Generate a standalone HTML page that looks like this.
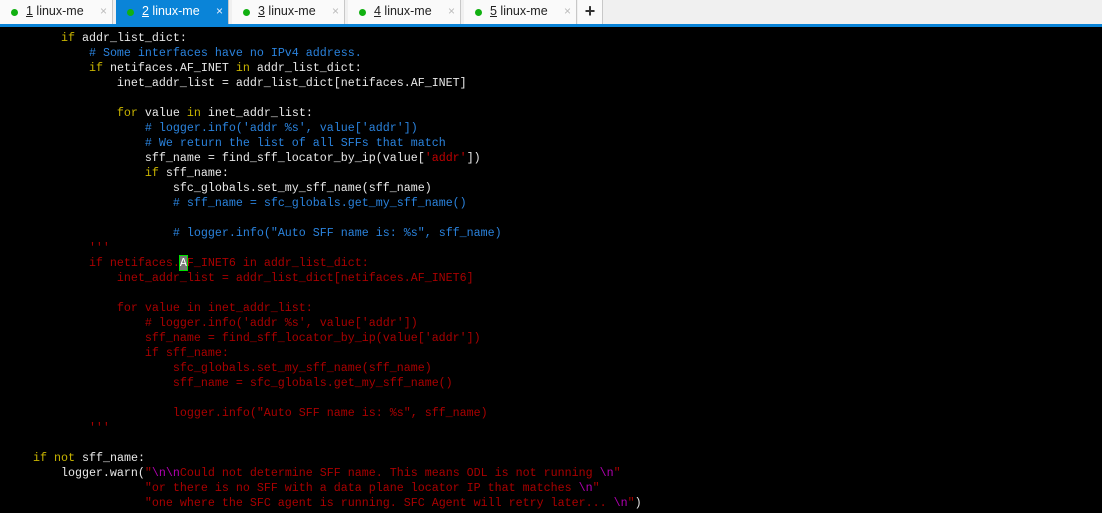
<!DOCTYPE html>
<html><head><meta charset="utf-8"><style>
html,body{margin:0;padding:0;background:#000;width:1102px;height:513px;overflow:hidden}
.tabs{position:absolute;left:0;top:0;width:1102px;height:24px;background:#f0f0f0;border-bottom:3px solid #0a84d8;font-family:"Liberation Sans",sans-serif;font-size:12.5px;color:#222}
.tab{position:absolute;top:0;height:24px;width:113px;background:#fafafa;border-right:1px solid #c8c8c8;box-sizing:border-box}
.tab.act{background:#0a84d8;color:#fff}
.tab .dot{position:absolute;left:11px;top:9px;width:7px;height:7px;border-radius:50%;background:#11b011}
.tab .t{position:absolute;left:26px;top:4px}
.tab .x{position:absolute;left:100px;top:4px;color:#bbb;font-size:12px}
.tab.act .x{color:#e8f0ff}
.plus{position:absolute;left:578px;top:0;width:24px;height:24px;background:#fafafa;border-right:1px solid #c8c8c8;font-size:18px;text-align:center;line-height:22px;font-weight:bold;color:#333}
pre{position:absolute;left:5px;top:31px;margin:0;font-family:"Liberation Mono",monospace;font-size:11.67px;line-height:15px;color:#e8e8e8;letter-spacing:0}
.k{color:#c8b400}.c{color:#2a82dc}.s{color:#c00000}.r{color:#a80000}.m{color:#b000b0}
.cur{outline:1px solid #00e000;background:#777;color:#fff}
</style></head><body>
<div class="tabs">
<div class="tab" style="left:0"><span class="dot"></span><span class="t"><u>1</u> linux-me</span><span class="x">×</span></div>
<div class="tab act" style="left:116px"><span class="dot"></span><span class="t"><u>2</u> linux-me</span><span class="x">×</span></div>
<div class="tab" style="left:232px"><span class="dot"></span><span class="t"><u>3</u> linux-me</span><span class="x">×</span></div>
<div class="tab" style="left:348px"><span class="dot"></span><span class="t"><u>4</u> linux-me</span><span class="x">×</span></div>
<div class="tab" style="left:464px"><span class="dot"></span><span class="t"><u>5</u> linux-me</span><span class="x">×</span></div>
<div class="plus">+</div>
</div>
<pre>        <span class="k">if</span> addr_list_dict:
            <span class="c"># Some interfaces have no IPv4 address.</span>
            <span class="k">if</span> netifaces.AF_INET <span class="k">in</span> addr_list_dict:
                inet_addr_list = addr_list_dict[netifaces.AF_INET]

                <span class="k">for</span> value <span class="k">in</span> inet_addr_list:
                    <span class="c"># logger.info('addr %s', value['addr'])</span>
                    <span class="c"># We return the list of all SFFs that match</span>
                    sff_name = find_sff_locator_by_ip(value[<span class="s">'addr'</span>])
                    <span class="k">if</span> sff_name:
                        sfc_globals.set_my_sff_name(sff_name)
                        <span class="c"># sff_name = sfc_globals.get_my_sff_name()</span>

                        <span class="c"># logger.info("Auto SFF name is: %s", sff_name)</span>
<span class="r">            '''
            if netifaces.<span class="cur">A</span>F_INET6 in addr_list_dict:
                inet_addr_list = addr_list_dict[netifaces.AF_INET6]

                for value in inet_addr_list:
                    # logger.info('addr %s', value['addr'])
                    sff_name = find_sff_locator_by_ip(value['addr'])
                    if sff_name:
                        sfc_globals.set_my_sff_name(sff_name)
                        sff_name = sfc_globals.get_my_sff_name()

                        logger.info("Auto SFF name is: %s", sff_name)
            '''</span>

    <span class="k">if</span> <span class="k">not</span> sff_name:
        logger.warn(<span class="r">"<span class="m">\n\n</span>Could not determine SFF name. This means ODL is not running <span class="m">\n</span>"</span>
                    <span class="r">"or there is no SFF with a data plane locator IP that matches <span class="m">\n</span>"</span>
                    <span class="r">"one where the SFC agent is running. SFC Agent will retry later... <span class="m">\n</span>"</span>)
</pre>
</body></html>
